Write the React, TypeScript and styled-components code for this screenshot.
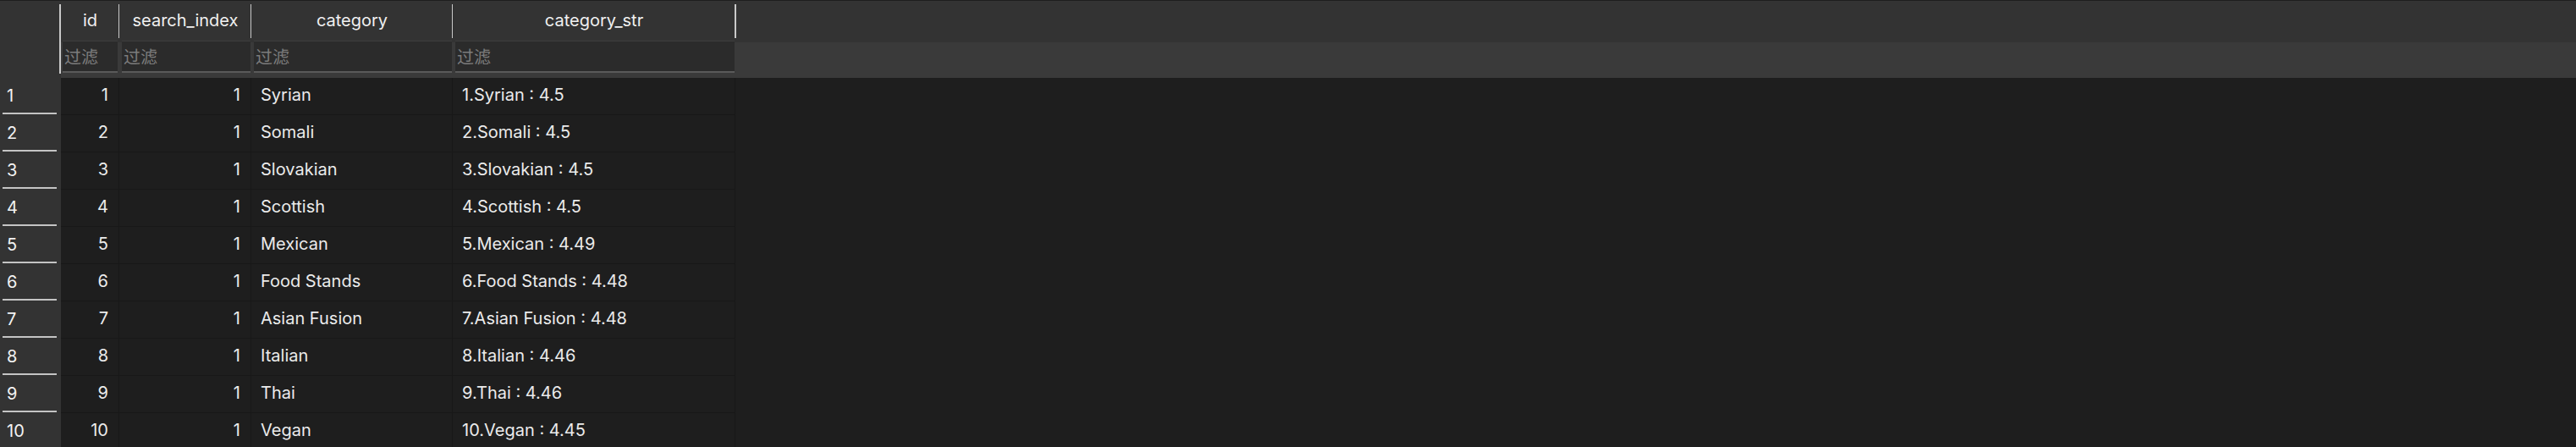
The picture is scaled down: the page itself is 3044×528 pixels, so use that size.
import React from "react";
import styled, { createGlobalStyle } from "styled-components";

const GlobalStyle = createGlobalStyle`
  html, body {
    margin: 0;
    padding: 0;
    background: #1e1e1e;
    overflow: hidden;
  }
  #root {
    width: 3044px;
    height: 528px;
    overflow: hidden;
  }
`;

const TEMPLATE = "72px 69px 156px 238px 334px 1fr";

type Align = "left" | "right";

interface Column {
  key: "id" | "search_index" | "category" | "category_str";
  label: string;
  align: Align;
}

const columns: Column[] = [
  { key: "id", label: "id", align: "right" },
  { key: "search_index", label: "search_index", align: "right" },
  { key: "category", label: "category", align: "left" },
  { key: "category_str", label: "category_str", align: "left" },
];

const rows = [
  { id: 1, search_index: 1, category: "Syrian", category_str: "1.Syrian : 4.5" },
  { id: 2, search_index: 1, category: "Somali", category_str: "2.Somali : 4.5" },
  { id: 3, search_index: 1, category: "Slovakian", category_str: "3.Slovakian : 4.5" },
  { id: 4, search_index: 1, category: "Scottish", category_str: "4.Scottish : 4.5" },
  { id: 5, search_index: 1, category: "Mexican", category_str: "5.Mexican : 4.49" },
  { id: 6, search_index: 1, category: "Food Stands", category_str: "6.Food Stands : 4.48" },
  { id: 7, search_index: 1, category: "Asian Fusion", category_str: "7.Asian Fusion : 4.48" },
  { id: 8, search_index: 1, category: "Italian", category_str: "8.Italian : 4.46" },
  { id: 9, search_index: 1, category: "Thai", category_str: "9.Thai : 4.46" },
  { id: 10, search_index: 1, category: "Vegan", category_str: "10.Vegan : 4.45" },
];

const Page = styled.div`
  width: 3044px;
  height: 528px;
  overflow: hidden;
  background: #1e1e1e;
  padding-top: 1px;
  box-sizing: border-box;
  font-family: Inter, "Noto Sans CJK SC", sans-serif;
  font-size: 20px;
  color: #ebebeb;
`;

const HeadGrid = styled.div`
  display: grid;
  grid-template-columns: ${TEMPLATE};
  grid-template-rows: 47px 44px;
`;

const Corner = styled.div`
  grid-row: 1 / span 2;
  background: #333333;
  position: relative;
  &::after {
    content: "";
    position: absolute;
    right: 0;
    top: 4px;
    height: 82px;
    width: 2px;
    background: #c9c9c9;
  }
`;

const HeaderCell = styled.div<{ $divider?: boolean }>`
  background: #333333;
  position: relative;
  display: flex;
  align-items: center;
  justify-content: center;
  color: #f0f0f0;
  padding-bottom: 2px;
  box-sizing: border-box;
  &::after {
    content: "";
    display: ${(p) => (p.$divider ? "block" : "none")};
    position: absolute;
    right: -1px;
    top: 4px;
    height: 40px;
    width: 2px;
    background: #c9c9c9;
  }
`;

const FilterCell = styled.div<{ $first?: boolean }>`
  background: linear-gradient(#333333 0 2px, #3a3a3a 2px);
  padding: 0 ${(p) => (p.$first ? "2px" : "1px")} 6px ${(p) => (p.$first ? "2px" : "3px")};
  display: flex;
`;

const FilterBox = styled.div`
  flex: 1;
  background: #2b2b2b;
  border-top: 1px solid #3d3d3d;
  border-bottom: 2px solid #5a5a5a;
  display: flex;
  align-items: center;
  padding-left: 2px;
  color: #7c7c7c;
  font-family: "Noto Sans CJK SC", sans-serif;
  font-size: 20px;
  padding-bottom: 1px;
`;

const Row = styled.div`
  display: grid;
  grid-template-columns: ${TEMPLATE};
  height: 44px;
`;

const RowNum = styled.div`
  background: #333333;
  position: relative;
  display: flex;
  align-items: center;
  padding-left: 8px;
  padding-bottom: 3px;
  color: #f2f2f2;
  &::after {
    content: "";
    position: absolute;
    left: 3px;
    width: 64px;
    bottom: 1px;
    height: 2px;
    background: #c4c4c4;
  }
`;

const Cell = styled.div<{ $align: Align }>`
  background: #1e1e1e;
  border-right: 1px solid #181818;
  border-bottom: 1px solid #181818;
  display: flex;
  align-items: center;
  justify-content: ${(p) => (p.$align === "right" ? "flex-end" : "flex-start")};
  padding: 0 ${(p) => (p.$align === "right" ? "12px" : "0")} 3px
    ${(p) => (p.$align === "left" ? "11px" : "0")};
  white-space: nowrap;
  overflow: hidden;
`;

const Filler = styled.div`
  background: #1e1e1e;
`;

const HeadFiller = styled.div`
  background: #333333;
`;

const FilterFiller = styled.div`
  background: linear-gradient(#333333 0 2px, #3a3a3a 2px);
`;

export default function App() {
  return (
    <>
      <GlobalStyle />
      <Page>
        <HeadGrid>
          <Corner />
          {columns.map((c) => (
            <HeaderCell key={c.key} $divider>
              {c.label}
            </HeaderCell>
          ))}
          <HeadFiller />
          {columns.map((c, i) => (
            <FilterCell key={c.key} $first={i === 0}>
              <FilterBox>过滤</FilterBox>
            </FilterCell>
          ))}
          <FilterFiller />
        </HeadGrid>
        {rows.map((r, i) => (
          <Row key={r.id}>
            <RowNum>{i + 1}</RowNum>
            {columns.map((c) => (
              <Cell key={c.key} $align={c.align}>
                {r[c.key]}
              </Cell>
            ))}
            <Filler />
          </Row>
        ))}
      </Page>
    </>
  );
}
